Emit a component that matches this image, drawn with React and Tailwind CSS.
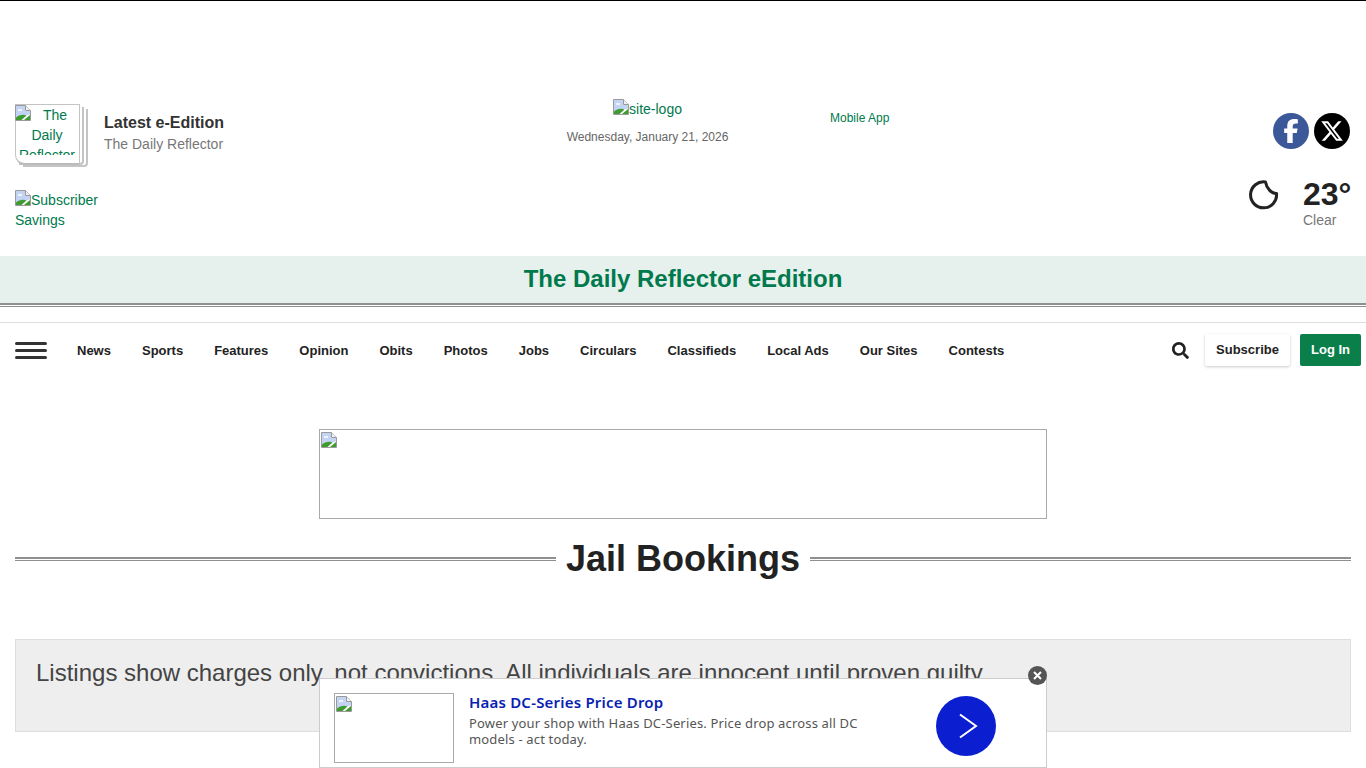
import React from "react";
import { FaFacebookF, FaXTwitter } from "react-icons/fa6";
import { FaSearch } from "react-icons/fa";

function Broken({ className = "" }) {
  return (
    <svg width="16" height="16" viewBox="0 0 16 16" className={"inline-block align-baseline " + className}>
      <path d="M0.5 0.5H10.5L15.5 5.5V15.5H0.5Z" fill="#fff" stroke="#9a9a9a" />
      <path d="M10.5 0.5V5.5H15.5" fill="#f0f0f0" stroke="#9a9a9a" />
      <path d="M1 1H10V6H15V9.5L1 12.5Z" fill="#c3d3f3" />
      <path d="M3 4H7V6H3Z" fill="#eef3fd" />
      <path d="M1 15V12.5C4 9.5 9 9 11.5 10.5L6.5 15Z" fill="#3f9a32" />
      <path d="M9 15L15 10V15Z" fill="#3f9a32" />
    </svg>
  );
}

const nav = ["News", "Sports", "Features", "Opinion", "Obits", "Photos", "Jobs", "Circulars", "Classifieds", "Local Ads", "Our Sites", "Contests"];

export default function App() {
  return (
    <div className="font-['Liberation_Sans',Arial,sans-serif] text-[#222] bg-white min-h-[768px] border-t border-black">
      <div className="h-[97px]" />
      <header className="flex h-[158px] px-[15px]">
        <div className="w-[500px] flex flex-col">
          <div className="flex pt-[6px] h-[92px]">
            <div className="relative w-[73px] h-[63px]">
              <div className="absolute left-[8px] top-[5px] w-[65px] h-[58px] border-r-2 border-b-2 border-[#c4c4c4] rounded-br-[4px]" />
              <div className="absolute left-[4px] top-[3px] w-[65px] h-[58px] border-r-2 border-b-2 border-[#c4c4c4] rounded-br-[4px] bg-white" />
              <div className="absolute left-0 top-0 w-[65px] h-[61px] border border-[#c4c4c4] border-b-2 border-b-[#bbb] rounded-bl-[10px] bg-white" />
              <div className="absolute left-0 top-px w-[64px] h-[50px] overflow-hidden text-center text-[14px] leading-[20px] text-[#007a4d]">
                <Broken className="float-left" />The Daily Reflector
              </div>
            </div>
            <div className="ml-4">
              <div className="text-[16px] leading-[20px] font-bold text-[#333] mt-[9px]">Latest e-Edition</div>
              <div className="text-[14px] leading-[20px] text-[#777] mt-px">The Daily Reflector</div>
            </div>
          </div>
          <div className="w-[90px] text-[14px] leading-[20px] text-[#007a4d]">
            <Broken className="-mb-[1px]" />Subscriber Savings
          </div>
        </div>
        <div className="w-[265px] flex flex-col items-center pt-[1px]">
          <div className="text-[14px] leading-[20px] text-[#007a4d]"><Broken className="-mb-[1px]" />site-logo</div>
          <div className="text-[12px] leading-[16px] text-[#666] mt-[10px]">Wednesday, January 21, 2026</div>
        </div>
        <div className="pl-[50px] pt-[13px] text-[12px] leading-[14px] text-[#007a4d]">Mobile App</div>
        <div className="ml-auto flex flex-col items-end">
          <div className="flex gap-[5px] pt-[15px] mr-px">
            <div className="w-9 h-9 rounded-full bg-[#3b5998] flex items-center justify-center text-white"><FaFacebookF size={24} /></div>
            <div className="w-9 h-9 rounded-full bg-black flex items-center justify-center text-white"><FaXTwitter size={24} /></div>
          </div>
          <div className="flex mt-[26px]">
            <svg width="32" height="32" viewBox="0 0 32 32" fill="none" stroke="#222" strokeWidth="3" className="mt-[4px]" strokeLinecap="round" strokeLinejoin="round">
              <path d="M16.5 3A13 13 0 1 0 27.5 14.5C23 15 17.5 9.5 16.5 3Z" />
            </svg>
            <div className="ml-[22px] w-[48px] pt-px">
              <div className="text-[32px] leading-[36px] font-bold text-[#222]">23°</div>
              <div className="text-[14px] leading-[16px] text-[#777]">Clear</div>
            </div>
          </div>
        </div>
      </header>
      <div className="h-[47px] bg-[#e6f0ec] text-center text-[24px] leading-[46px] font-bold text-[#007a4d]">
        The Daily Reflector eEdition
      </div>
      <div className="h-[4px] border-t-2 border-b border-[#8f8f8f]" />
      <div className="h-[16px] border-b border-[#ddd]" />
      <nav className="flex items-center h-[54px] px-[15px] pr-[5px]">
        <div className="flex flex-col gap-[4px] w-8 mr-[30px]">
          <span className="h-[3px] bg-[#333] rounded-sm" />
          <span className="h-[3px] bg-[#333] rounded-sm" />
          <span className="h-[3px] bg-[#333] rounded-sm" />
        </div>
        <div className="flex gap-[31px] text-[13px] font-bold text-[#222] pt-px">
          {nav.map((n) => <span key={n}>{n}</span>)}
        </div>
        <FaSearch size={17} className="ml-auto mr-[16px] text-[#222]" />
        <div className="h-8 w-[85px] flex items-center justify-center rounded-[2px] bg-white shadow-[0_1px_3px_rgba(0,0,0,0.2)] text-[13px] font-bold text-[#222]">Subscribe</div>
        <div className="ml-[10px] h-8 w-[61px] flex items-center justify-center rounded-[2px] bg-[#0a7f4a] text-[13px] font-bold text-white">Log In</div>
      </nav>
      <div className="flex justify-center mt-[52px]">
        <div className="w-[728px] h-[90px] border border-[#aaa] pl-px pt-px"><Broken className="block" /></div>
      </div>
      <div className="flex items-center gap-[10px] px-[15px] mt-[20px]">
        <div className="flex-1 h-[4px] border-t-2 border-b border-[#8f8f8f]" />
        <h1 className="text-[36px] leading-[40px] font-bold text-[#222]">Jail Bookings</h1>
        <div className="flex-1 h-[4px] border-t-2 border-b border-[#8f8f8f]" />
      </div>
      <div className="mx-[15px] mt-[60px] h-[93px] bg-[#eee] border border-[#ddd] pl-5 pt-[17px] text-[24px] leading-[32px] text-[#444]">
        Listings show charges only, not convictions. All individuals are innocent until proven guilty.
      </div>
      <div className="fixed left-[319px] bottom-0 w-[728px] h-[90px] bg-white border border-[#ccc] flex items-start pl-[14px] pt-[14px]">
        <div className="w-[120px] h-[70px] border border-[#aaa] pl-px pt-px shrink-0"><Broken className="block" /></div>
        <div className="ml-[15px] w-[420px] -mt-[1px] font-['Noto_Sans',sans-serif]">
          <div className="text-[15px] leading-[20px] font-semibold tracking-[0.2px] text-[#0a1fb0]">Haas DC-Series Price Drop</div>
          <div className="text-[13px] leading-[16px] tracking-[0.16px] text-[#555] mt-[3px]">Power your shop with Haas DC-Series. Price drop across all DC models - act today.</div>
        </div>
        <div className="absolute left-[616px] top-[17px] w-[60px] h-[60px] rounded-full bg-[#0b1fd0] flex items-center justify-center">
          <svg width="20" height="28" viewBox="0 0 20 28" fill="none" stroke="#fff" strokeWidth="2" className="ml-[3px]"><path d="M2 2.5L18 14L2 25.5" /></svg>
        </div>
        <div className="absolute -top-[13px] -right-px w-[19px] h-[19px] rounded-full bg-[#555] flex items-center justify-center">
          <svg width="9" height="9" viewBox="0 0 9 9" stroke="#fff" strokeWidth="2"><path d="M1 1L8 8M8 1L1 8" /></svg>
        </div>
      </div>
    </div>
  );
}
